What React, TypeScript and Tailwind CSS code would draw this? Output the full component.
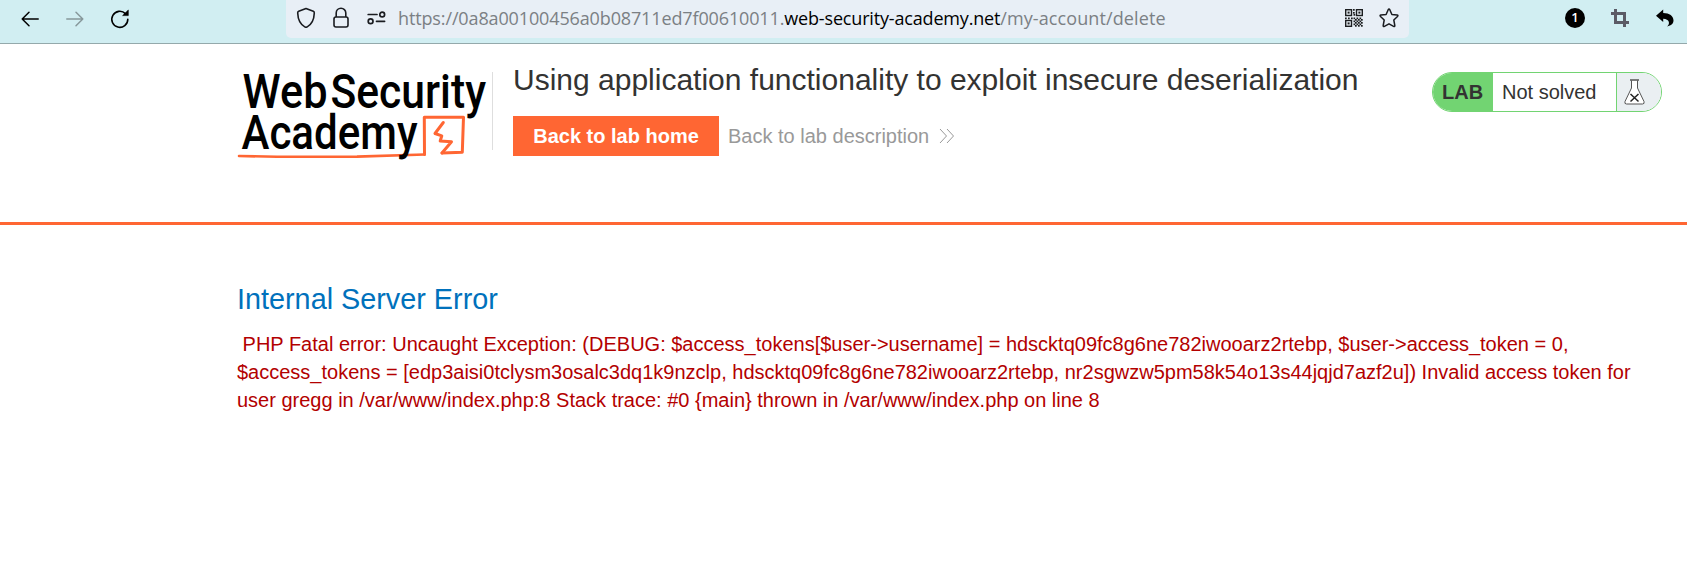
import React from "react";

function BackIcon() {
  return (
    <svg width="18" height="16" viewBox="0 0 18 16" fill="none" stroke="currentColor" strokeWidth="1.5" strokeLinecap="round" strokeLinejoin="round">
      <path d="M17.2 8H1.2M8 1.2 1.2 8 8 14.8" />
    </svg>
  );
}

function ReloadIcon() {
  return (
    <svg width="20" height="20" viewBox="0 0 20 20" fill="none">
      <path d="M17.8 10.2A8 8 0 1 1 15.4 4.6" stroke="#000" strokeWidth="1.6" strokeLinecap="round" />
      <path d="M18.3 1V6.6H12.6Z" fill="#000" stroke="#000" strokeWidth=".6" strokeLinejoin="round" />
    </svg>
  );
}

function ShieldIcon() {
  return (
    <svg width="20" height="22" viewBox="0 0 20 22" fill="none" stroke="#1a1c20" strokeWidth="1.6" strokeLinejoin="round">
      <path d="M10 1.6 17.3 4.3Q18.4 4.8 18.3 6C18.1 11.5 16.4 17.2 10.9 20.1Q10 20.5 9.1 20.1C3.6 17.2 1.9 11.5 1.7 6Q1.6 4.8 2.7 4.3Z" />
    </svg>
  );
}

function LockIcon() {
  return (
    <svg width="16" height="22" viewBox="0 0 16 22" fill="none" stroke="#1a1c20" strokeWidth="1.6">
      <rect x="1" y="10" width="14" height="10" rx="2" />
      <path d="M3.2 10V6A4.8 4.8 0 0 1 12.8 6V10" />
    </svg>
  );
}

function PermissionsIcon() {
  return (
    <svg width="19" height="14" viewBox="0 0 19 14" fill="none" stroke="#1a1c20" strokeWidth="1.7" strokeLinecap="round">
      <path d="M1.2 3.5H10M9.5 10.3H17.6" />
      <circle cx="15.2" cy="3.5" r="2.4" />
      <circle cx="3.6" cy="10.3" r="2.4" />
    </svg>
  );
}

const qrCells = [
  "8,0", "8,3", "8.5,5", "0,8.5", "3,8.5", "6,8.5", "8.5,8.5",
  "10,10", "13,10", "16,10", "11.5,8.5", "14.5,8.5", "11.5,11.5", "14.5,11.5",
  "10,13", "13,13", "16,13", "8.5,11.5", "8.5,14.5", "11.5,14.5", "14.5,14.5",
  "10,16", "13,16", "16,16",
].map((cell) => cell.split(",").map(Number));

function QrIcon() {
  return (
    <svg width="18" height="18" viewBox="0 0 18 18" fill="#1c1e20">
      {[[0, 0], [10.8, 0], [0, 10.8]].map(([x, y]) => (
        <g key={`${x}-${y}`}>
          <rect x={x + 0.7} y={y + 0.7} width="5.8" height="5.8" fill="none" stroke="#1c1e20" strokeWidth="1.4" />
          <rect x={x + 2.6} y={y + 2.6} width="2" height="2" />
        </g>
      ))}
      {qrCells.map(([x, y]) => (
        <rect key={`${x}-${y}`} x={x} y={y} width="1.7" height="1.7" />
      ))}
    </svg>
  );
}

function StarIcon() {
  return (
    <svg width="20" height="20" viewBox="0 0 20 20" fill="none" stroke="#1a1c20" strokeWidth="1.5" strokeLinejoin="round">
      <path d="M9.2 1.7Q10 .2 10.800 1.7L12.9 6.5 18 7.1Q19.6 7.4 18.5 8.5L14.8 12 15.8 17.5Q15.9 19 14.6 18.4L10 15.8 5.4 18.4Q4.1 19 4.2 17.5L5.2 12 1.5 8.5Q.4 7.4 2 7.1L7.1 6.5Z" />
    </svg>
  );
}

function CropIcon() {
  return (
    <svg width="18" height="18" viewBox="0 0 18 18" fill="none" stroke="#5b5b66" strokeWidth="3">
      <path d="M4.5 0V13.5H18M0 4.5H13.5V18" />
    </svg>
  );
}

function UndoIcon() {
  return (
    <svg width="18" height="18" viewBox="0 0 18 18" fill="#000">
      <path d="M0 6.7 7.2 .4V4C13.5 4 17.5 7 17.5 11.5 17.5 14.5 15.5 16.6 11 17.4 14.5 15 13.5 9.8 7.2 9.7V13Z" />
    </svg>
  );
}

function Logo() {
  return (
    <svg width="255" height="100" viewBox="0 0 255 100" className="shrink-0 overflow-visible" fontFamily="Roboto, sans-serif" fontSize="49" fontWeight="500">
      <g fill="#000">
        <text x="5.5" y="44.3" textLength="85" lengthAdjust="spacingAndGlyphs">Web</text>
        <text x="93.5" y="44.3" textLength="155.5" lengthAdjust="spacingAndGlyphs">Security</text>
      </g>
      <g fill="none" stroke="#ff6633" strokeLinecap="round" strokeLinejoin="round">
        <path d="M2 92 40 92.8 120 92.600 187.500 90.500" strokeWidth="2.6" />
        <path d="M187.500 90.500 187.300 53.200 226.500 53.200 225.300 88.200 205 89" strokeWidth="3" />
        <path d="M206.300 58.500 198 69.500 204.800 71.800 203.200 77 214.500 77.700 205 89" strokeWidth="3" />
      </g>
      <text x="4.5" y="85" fill="#000" textLength="176" lengthAdjust="spacingAndGlyphs">Academy</text>
    </svg>
  );
}

function FlaskIcon() {
  return (
    <svg width="21" height="26" viewBox="0 0 21 26" fill="none" stroke="#555" strokeWidth="1">
      <path d="M7.5 1.5V9L1 22.5Q.2 25 2.5 25H18.5Q20.8 25 20 22.500L13.5 9V1.5" fill="#fff" />
      <path d="M6 1H15" strokeWidth="1.5" />
      <path d="M6.5 15 14.5 22.5M14.5 15 6.5 22.5" stroke="#222" strokeWidth="1.5" />
    </svg>
  );
}

function Toolbar() {
  return (
    <header className="flex h-11 items-start border-b border-[#94a9ab] bg-[#d1eef2]">
      <nav className="flex h-[37px] w-[286px] shrink-0 items-center pl-[21px]">
        <span className="text-black"><BackIcon /></span>
        <span className="ml-[27px] -scale-x-100 text-[#87989b]"><BackIcon /></span>
        <span className="ml-[26px]"><ReloadIcon /></span>
      </nav>
      <div className="flex h-[38px] w-[1123px] shrink-0 items-center rounded-b-[5px] bg-[#e8eff6] px-[10px] pb-[2px]">
        <ShieldIcon />
        <span className="ml-[17px]"><LockIcon /></span>
        <span className="ml-[18px]"><PermissionsIcon /></span>
        <div className="ml-[12px] flex-1 whitespace-nowrap font-['Open_Sans',sans-serif] text-[18px] leading-[36px] text-[#7b8084]">
          <span className="tracking-[-0.13px]">https://0a8a00100456a0b08711ed7f00610011.</span>
          <span className="tracking-[-0.17px] text-black">web-security-academy.net</span>
          <span className="tracking-[0.1px]">/my-account/delete</span>
        </div>
        <QrIcon />
        <span className="ml-4"><StarIcon /></span>
      </div>
      <div className="flex h-9 flex-1 items-center pl-[156px]">
        <span className="flex size-5 items-center justify-center rounded-full bg-black font-['Open_Sans',sans-serif] text-[13px] font-semibold text-white">1</span>
        <span className="ml-[26px]"><CropIcon /></span>
        <span className="ml-[27px]"><UndoIcon /></span>
      </div>
    </header>
  );
}

function LabStatus() {
  return (
    <div className="mt-7 flex h-10 w-[230px] overflow-hidden rounded-full border border-[#72d472] text-[20px] leading-[38px] text-[#333332]">
      <span className="w-[60px] bg-[#72d472] pl-[9px] font-bold">LAB</span>
      <span className="w-[124px] border-r border-[#72d472] pl-[9px]">Not solved</span>
      <span className="flex flex-1 items-center bg-[#eaeff2] pl-[7px]"><FlaskIcon /></span>
    </div>
  );
}

export default function App() {
  return (
    <div className="h-[568px] w-[1687px] overflow-hidden bg-white font-['Liberation_Sans',Arial,sans-serif]">
      <Toolbar />
      <section className="flex h-[181px] border-b-[3px] border-[#ff6633] pl-[237px]">
        <div className="mt-5"><Logo /></div>
        <div className="mt-7 h-[78px] w-px bg-[#dedede]" />
        <div className="ml-5 w-[919px]">
          <h2 className="mt-[19px] whitespace-nowrap text-[30px] leading-[34px] text-[#333332]">
            Using application functionality to exploit insecure deserialization
          </h2>
          <div className="mt-[19px] flex h-10 items-center text-[20px]">
            <a className="flex h-10 w-[206px] items-center justify-center bg-[#ff6633] font-bold text-white">Back to lab home</a>
            <a className="ml-[9px] text-[#999]">Back to lab description</a>
            <svg width="16" height="16" viewBox="0 0 16 16" fill="none" stroke="#999" className="ml-[10px]">
              <path d="M1 1 7.5 8 1 15M8 1 14.5 8 8 15" />
            </svg>
          </div>
        </div>
        <LabStatus />
      </section>
      <main className="pl-[237px] pt-[57px]">
        <h4 className="text-[28.8px] leading-[34px] text-[#0071bc]">Internal Server Error</h4>
        <p className="mt-[14px] whitespace-pre text-[20px] leading-7 text-[#b30000]">
          {" PHP Fatal error: Uncaught Exception: (DEBUG: $access_tokens[$user->username] = hdscktq09fc8g6ne782iwooarz2rtebp, $user->access_token = 0,\n$access_tokens = [edp3aisi0tclysm3osalc3dq1k9nzclp, hdscktq09fc8g6ne782iwooarz2rtebp, nr2sgwzw5pm58k54o13s44jqjd7azf2u]) Invalid access token for\nuser gregg in /var/www/index.php:8 Stack trace: #0 {main} thrown in /var/www/index.php on line 8"}
        </p>
      </main>
    </div>
  );
}
